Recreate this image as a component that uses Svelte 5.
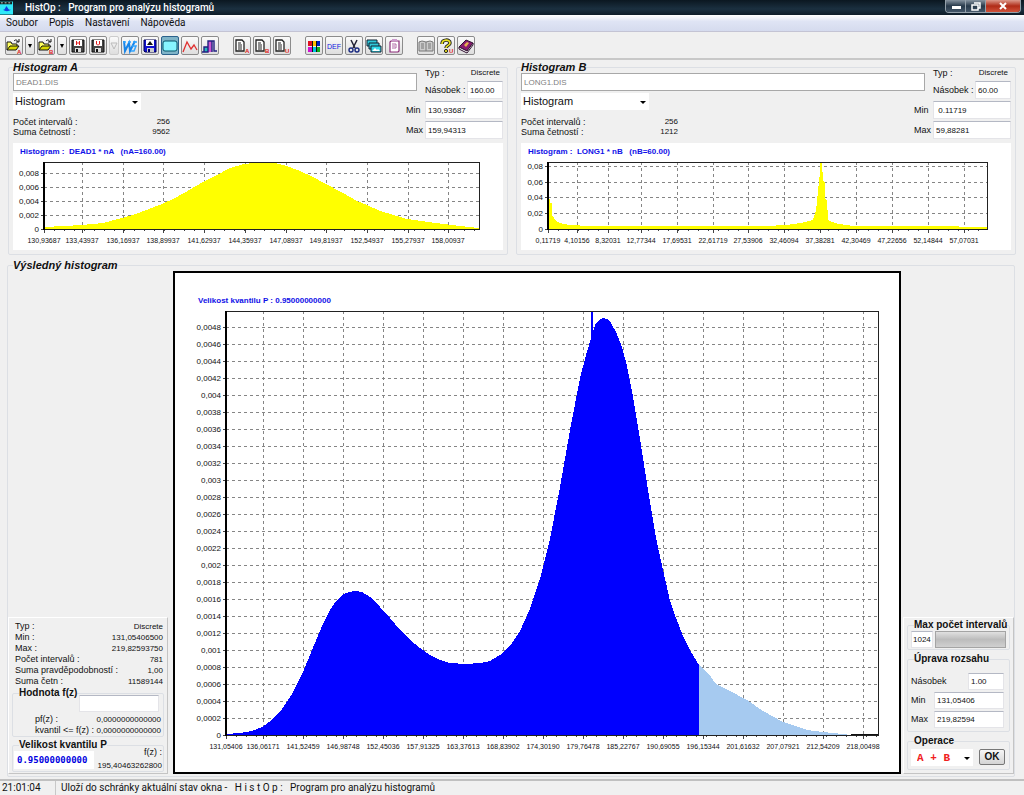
<script lang="ts">
	type Tick = [number, string];
	type Area = { fill: string; points: string };
	type Chart = {
		id: string;
		width: number;
		height: number;
		title: string;
		titleX: number;
		titleY: number;
		left: number;
		right: number;
		top: number;
		bottom: number;
		labelY: number;
		xs: Tick[];
		ys: Tick[];
		areas: Area[];
	};

	const menu = ['Soubor', 'Popis', 'Nastavení', 'Nápověda'];

	const toolbar = [
		['openA', 'drop', 'openB', 'drop', 'saveH', 'saveU', 'dropOff', 'word', 'disk', 'rect', 'curve', 'bars'],
		['docA', 'docB', 'docU'],
		['colors', 'def', 'cut', 'windows', 'paste'],
		['book', 'help', 'manual']
	];

	const labelsA = '133,43937 136,16937 138,89937 141,62937 144,35937 147,08937 149,81937 152,54937 155,27937 158,00937'.split(' ');
	const labelsB = '8,32031 12,77344 17,69531 22,61719 27,53906 32,46094 37,38281 42,30469 47,22656 52,14844 57,07031'.split(' ');
	const gridB = [87, 120, 156, 192, 227, 263, 299, 335, 371, 407, 443];
	const labelsR = '136,06171 141,52459 146,98748 152,45036 157,91325 163,37613 168,83902 174,30190 179,76478 185,22767 190,69055 196,15344 201,61632 207,07921 212,54209 218,00498'.split(' ');

	const chartA: Chart = {
		id: 'a',
		width: 490,
		height: 107,
		title: 'Histogram :  DEAD1 * nA   (nA=160.00)',
		titleX: 7,
		titleY: 11,
		left: 31,
		right: 466,
		top: 19,
		bottom: 86,
		labelY: 100,
		xs: [[31, '130,93687'], ...labelsA.map((l, i): Tick => [Math.round(69 + i * 40.7), l])],
		ys: [[30, '0,008'], [44, '0,006'], [58, '0,004'], [72, '0,002'], [86, '0']],
		areas: [
			{
				fill: '#ffff00',
				points: '31,84 50,83 69,82 90,80 109,75 123,71 136,66 149,61 160,56 171,50 190,39 204,32 217,25 231,21 240,20 262,20 274,23 287,28 300,34 313,41 330,50 344,58 354,62 367,68 374,70 394,76 415,79 447,83 466,85'
			}
		]
	};

	const chartB: Chart = {
		id: 'b',
		width: 490,
		height: 107,
		title: 'Histogram :  LONG1 * nB   (nB=60.00)',
		titleX: 7,
		titleY: 11,
		left: 27,
		right: 466,
		top: 19,
		bottom: 86,
		labelY: 100,
		xs: [[27, '0,11719'], [56, '4,10156'], ...labelsB.map((l, i): Tick => [gridB[i], l])],
		ys: [[23, '0,08'], [39, '0,06'], [54, '0,04'], [70, '0,02'], [86, '0']],
		areas: [
			{
				fill: '#ffff00',
				points: '27,56 29,56 29,60 31,60 31,72 33,75 35,78 39,80 48,82 70,83 245,83 265,82 280,80 292,77 293,73 295,68 297,48 299,30 299,20 301,20 302,38 304,40 304,56 306,57 307,77 311,79 318,81 333,83 410,83 466,84'
			}
		]
	};

	// counted in steps of 0.0002
	function resultLabel(step: number) {
		if (step === 0) return '0';
		return '0,' + (step * 2).toString().padStart(4, '0').replace(/0+$/, '');
	}

	const result: Chart = {
		id: 'r',
		width: 724,
		height: 499,
		title: 'Velikost kvantilu P : 0.95000000000',
		titleX: 23,
		titleY: 30,
		left: 51,
		right: 703,
		top: 38,
		bottom: 462,
		labelY: 476,
		xs: [[51, '131,05406'], ...labelsR.map((l, i): Tick => [88 + i * 40, l])],
		ys: Array.from({ length: 25 }, (_, i): Tick => [462 - i * 17, resultLabel(i)]),
		areas: [
			{
				fill: '#0000ff',
				points: '51,461 65,460 77,458 87,454 97,447 107,436 117,421 128,399 137,377 147,353 155,337 161,328 167,322 174,319 180,318 187,319 195,324 205,334 215,345 225,357 235,367 245,375 255,382 265,387 275,390 290,391 305,390 315,388 325,382 335,373 345,358 355,336 365,306 375,266 385,214 395,157 405,105 411,82 417,62 421,50 425,46 428,45 432,46 436,50 441,59 447,74 452,93 457,118 465,166 473,217 481,265 486,288 495,328 501,345 508,363 515,377 524,392'
			},
			{
				fill: '#a6caf0',
				points: '524,392 530,397 536,404 541,411 555,418 572,427 588,438 608,449 632,457 648,459 668,461 675,462'
			}
		]
	};

	const inputs = [
		{ id: 'a', name: 'Histogram A', file: 'DEAD1.DIS', sum: '9562', factor: '160.00', min: '130,93687', max: '159,94313', chart: chartA },
		{ id: 'b', name: 'Histogram B', file: 'LONG1.DIS', sum: '1212', factor: '60.00', min: ' 0.11719', max: '59,88281', chart: chartB }
	];

	const stats = [
		['Typ :', 'Discrete'],
		['Min :', '131,05406500'],
		['Max :', '219,82593750'],
		['Počet intervalů :', '781'],
		['Suma pravděpodobností :', '1,00'],
		['Suma četn :', '11589144']
	];

	function closed(area: Area, bottom: number) {
		const pts = area.points.split(' ');
		const first = pts[0].split(',')[0];
		const last = pts[pts.length - 1].split(',')[0];
		return `${first},${bottom} ${area.points} ${last},${bottom}`;
	}

	function minor(c: Chart) {
		const out: number[] = [];
		for (let x = c.left + 10; x < c.right; x += 10) out.push(x);
		return out;
	}
</script>

{#snippet plot(c: Chart)}
	<svg class="plot" viewBox="0 0 {c.width} {c.height}" role="img" aria-label={c.title}>
		<text class="plot-title" x={c.titleX} y={c.titleY}>{c.title}</text>
		{#each c.ys as [y, label] (y)}
			<line class="grid" x1={c.left} x2={c.right} y1={y + 0.5} y2={y + 0.5} />
			<line class="tick" x1={c.left - 3} x2={c.left} y1={y + 0.5} y2={y + 0.5} />
			<text class="axis" text-anchor="end" x={c.left - 5} y={y + 3}>{label}</text>
		{/each}
		{#each c.xs as [x, label], i (x)}
			{#if i > 0}
				<line class="grid" x1={x + 0.5} x2={x + 0.5} y1={c.top} y2={c.bottom} />
			{/if}
			<line class="tick" x1={x + 0.5} x2={x + 0.5} y1={c.bottom} y2={c.bottom + 4} />
			<text class="axis x-label" text-anchor="middle" {x} y={c.labelY}>{label}</text>
		{/each}
		{#each minor(c) as x (x)}
			<line class="tick" x1={x + 0.5} x2={x + 0.5} y1={c.bottom} y2={c.bottom + 2} />
		{/each}
		{#each c.areas as area (area.fill)}
			<polygon points={closed(area, c.bottom)} fill={area.fill} shape-rendering="crispEdges" />
		{/each}
		{#if c.id === 'r'}
			<rect x="416" y={c.top} width="2" height="35" fill="#0000ff" />
			<rect x="676" y="461" width="27" height="2" fill="#111" />
		{/if}
		<rect class="frame" x={c.left + 0.5} y={c.top + 0.5} width={c.right - c.left} height={c.bottom - c.top} />
		<line class="y-axis" x1={c.left} x2={c.left} y1={c.top} y2={c.bottom + 1} />
	</svg>
{/snippet}

{#snippet icon(name: string)}
	<svg class="icon" viewBox="0 0 16 16" aria-hidden="true">
		{#if name === 'openA' || name === 'openB'}
			<path d="M1 12V4h4l1 2h5v2" fill="#ffff60" stroke="#111" />
			<path d="M1 12l3-4h9l-3 4z" fill="#d8d800" stroke="#111" />
			<path d="M8 3c2-2 3-1 4 1M13 1v3h-3" fill="none" stroke="#111" />
			<text class="mark" x="11" y="16">{name === 'openA' ? 'A' : 'B'}</text>
		{:else if name === 'saveH' || name === 'saveU'}
			<path d="M2 2h12v12H2z" fill="#444" stroke="#111" />
			<path d="M4 2h8v6H4z" fill="#fff" />
			<path d="M5 10h6v4H5z" fill="#ddd" />
			<path d="M6 11h2v3H6z" fill="#111" />
			<path d={name === 'saveH' ? 'M6.500 3v4M9.500 3v4M6 5h4' : 'M6.500 3v3l1 1h1l1-1V3'} fill="none" stroke="#e02020" />
		{:else if name === 'word'}
			<path d="M2 3l1 10 4-8 1 8 5-10" fill="none" stroke="#1684e8" stroke-width="2" />
			<path d="M1 4h3M6 4h3M11 4h4M10 8h4l-2 5H9" fill="none" stroke="#32a5ff" stroke-width="1.5" />
		{:else if name === 'disk'}
			<path d="M2 2h12v12H3l-1-1z" fill="#1010d0" stroke="#000050" />
			<path d="M4 2h8v6H4z" fill="#fff" />
			<path d="M5 7l3-4 3 4z" fill="#111" />
			<path d="M5 10h7v4H5z" fill="#ccc" />
			<path d="M6 11h2v3H6z" fill="#000070" />
		{:else if name === 'rect'}
			<rect x="1" y="3" width="14" height="10" rx="2" fill="#88f5ff" stroke="#075468" />
		{:else if name === 'curve'}
			<path d="M1 14l4-10 4 7 3-4 3 5" fill="none" stroke="#e03030" stroke-width="1.3" />
		{:else if name === 'bars'}
			<path d="M2 14V9h4v5z" fill="#25b7bd" />
			<path d="M6 14V3h4v11z" fill="#d055d0" />
			<path d="M0 14h6V3h6v10h3M2 14V9h4M10 3v11" fill="none" stroke="#202080" stroke-width="1.4" />
		{:else if name.startsWith('doc')}
			<path d="M2 2h6l2 2v9H2z" fill="#fff" stroke="#222" stroke-width="1.3" />
			<path d="M4 5h3M4 7h4M4 9h4M4 11h4" stroke="#222" />
			<text class="mark" x="11" y="15">{name.slice(3)}</text>
		{:else if name === 'colors'}
			<path d="M2 3h4v5H2z" fill="#e01020" />
			<path d="M7 3h3v5H7z" fill="#ffc000" />
			<path d="M11 3h3v5h-3z" fill="#0020c0" />
			<path d="M2 9h4v5H2z" fill="#d010d0" />
			<path d="M7 9h3v5H7z" fill="#00c8e0" />
			<path d="M11 9h3v5h-3z" fill="#10b020" />
			<path d="M6.500 3v11M10.500 3v11" stroke="#111" />
		{:else if name === 'def'}
			<text class="def" x="8" y="11" text-anchor="middle">DEF</text>
		{:else if name === 'cut'}
			<path d="M5 2l4 8M11 2L7 10" stroke="#223" stroke-width="1.5" />
			<circle cx="5" cy="12" r="2" fill="none" stroke="#1a2a80" stroke-width="1.4" />
			<circle cx="11" cy="12" r="2" fill="none" stroke="#1a2a80" stroke-width="1.4" />
		{:else if name === 'windows'}
			<path d="M1 2h10v6H1z" fill="#30c8d8" stroke="#123" />
			<path d="M3 5h10v6H3z" fill="#30c8d8" stroke="#123" />
			<path d="M5 8h10v6H5z" fill="#30d8e8" stroke="#123" />
			<path d="M6 13l3-3 2 2 1-1 2 2z" fill="#fff" />
		{:else if name === 'paste'}
			<path d="M5 3h8v10l-1 1H4V4z" fill="#fff" stroke="#8a2c78" stroke-width="1.2" />
			<path d="M6 1h5v2H6z" fill="#c9c" />
			<path d="M6 6h4v4H6M6 8h3" fill="none" stroke="#b06aa6" />
		{:else if name === 'book'}
			<path d="M1 4l3-1 4 1 4-1 3 1v9H1z" fill="#ccc" stroke="#777" />
			<path d="M8 4v9M3 6h3M3 8h3M3 10h3M10 6h3M10 8h3M10 10h3" stroke="#777" />
		{:else if name === 'help'}
			<path d="M4 6c0-5 8-5 8-1 0 3-4 2-4 5" fill="none" stroke="#222" stroke-width="3.5" />
			<path d="M4 6c0-5 8-5 8-1 0 3-4 2-4 5" fill="none" stroke="#e8e020" stroke-width="1.6" />
			<circle cx="8" cy="13" r="1.6" fill="#e8e020" stroke="#222" />
			<text class="mark" x="11" y="15">U</text>
		{:else if name === 'manual'}
			<path d="M1 9l7-7 7 3-6 8z" fill="#8a1a70" stroke="#301030" />
			<path d="M1 9v2l8 4 6-8V5l-6 8z" fill="#fff" stroke="#301030" />
			<path d="M6 7l3-3 2 1-3 4z" fill="#e8b050" />
		{/if}
	</svg>
{/snippet}

<div class="window">
	<header class="titlebar">
		<svg class="logo" viewBox="0 0 14 14" aria-hidden="true">
			<path d="M0 0h14v14H0z" fill="#30e8f8" />
			<path d="M0 0h13v3H0z" fill="#122" />
			<path d="M1 1h2v1H1zM5 1h2v1H5zM9 1h2v1H9z" fill="#fff" />
			<path d="M3 9c3 0 3-4 4-4s1 4 5 4c-3 2-6 2-9 0z" fill="#1040e0" />
		</svg>
		<h1>HistOp :&nbsp;&nbsp; Program pro analýzu histogramů</h1>
		<div class="window-buttons">
			<button aria-label="Minimalizovat"><svg viewBox="0 0 20 11"><path d="M6 5h9v3H6z" fill="#fff" /></svg></button>
			<button aria-label="Obnovit"><svg viewBox="0 0 20 11"><path d="M8 2h6v5h-2M6 4h6v5H6z" fill="none" stroke="#fff" stroke-width="1.5" /></svg></button>
			<button class="close" aria-label="Zavřít"><svg viewBox="0 0 20 11"><path d="M7 2l6 6M13 2L7 8" stroke="#fff" stroke-width="2" /></svg></button>
		</div>
	</header>

	<nav class="menu">
		{#each menu as item (item)}
			<button>{item}</button>
		{/each}
	</nav>

	<div class="toolbar">
		{#each toolbar as group, g (g)}
			<div class="tool-group">
				{#each group as tool, i (i)}
					{#if tool.startsWith('drop')}
						<button class="tool drop" class:off={tool === 'dropOff'} aria-label={tool}>
							<svg viewBox="0 0 8 8">
								{#if tool === 'drop'}<path d="M2 2h4L4 6z" />{:else}<path d="M1 1h6L4 7z" fill="none" stroke="#bbb" />{/if}
							</svg>
						</button>
					{:else}
						<button class="tool" class:pressed={tool === 'rect'} aria-label={tool}>{@render icon(tool)}</button>
					{/if}
				{/each}
			</div>
		{/each}
	</div>

	<main>
		<div class="inputs">
			{#each inputs as h (h.id)}
				<fieldset class="group">
					<legend class="heading">{h.name}</legend>
					<div class="top">
						<div class="source">
							<input class="file" value={h.file} aria-label="Soubor" />
							<div class="select kind">
								<select aria-label="Zobrazení"><option>Histogram</option></select>
							</div>
							<dl class="counts">
								<div><dt>Počet intervalů :</dt><dd>256</dd></div>
								<div><dt>Suma četností :</dt><dd>{h.sum}</dd></div>
							</dl>
						</div>
						<div class="range">
							<div class="type"><span>Typ :</span><span class="value">Discrete</span></div>
							<label class="factor">Násobek : <input value={h.factor} /></label>
							<label>Min <input value={h.min} /></label>
							<label>Max <input value={h.max} /></label>
						</div>
					</div>
					<div class="paper">{@render plot(h.chart)}</div>
				</fieldset>
			{/each}
		</div>

		<fieldset class="result">
			<legend class="heading">Výsledný histogram</legend>
			<div class="result-row">
				<aside class="side">
					<dl class="stats">
						{#each stats as [name, value] (name)}
							<div><dt>{name}</dt><dd>{value}</dd></div>
						{/each}
					</dl>
					<fieldset class="box">
						<legend><label for="fz">Hodnota f(z)</label></legend>
						<input id="fz" class="fz" value="" />
						<dl class="fz-values">
							<div><dt>pf(z) :</dt><dd>0,0000000000000</dd></div>
							<div><dt>kvantil &lt;= f(z) :</dt><dd>0,0000000000000</dd></div>
						</dl>
					</fieldset>
					<fieldset class="box">
						<legend><label for="quantile">Velikost kvantilu P</label></legend>
						<div class="quantile">
							<input id="quantile" value="0.95000000000" />
							<div class="quantile-value"><span>f(z) :</span><span class="value">195,40463262800</span></div>
						</div>
					</fieldset>
				</aside>

				<div class="paper framed">{@render plot(result)}</div>

				<aside class="side right">
					<fieldset class="box">
						<legend><label for="limit">Max počet intervalů</label></legend>
						<div class="limit">
							<input id="limit" value="1024" />
							<button class="bar" aria-label="Změnit počet intervalů"></button>
						</div>
					</fieldset>
					<fieldset class="box">
						<legend>Úprava rozsahu</legend>
						<div class="adjust">
							<label>Násobek <input class="short" value="1.00" /></label>
							<label>Min <input value="131,05406" /></label>
							<label>Max <input value="219,82594" /></label>
						</div>
					</fieldset>
					<fieldset class="box">
						<legend>Operace</legend>
						<div class="operation">
							<div class="select op">
								<select aria-label="Operace"><option>A + B</option></select>
							</div>
							<button class="ok">OK</button>
						</div>
					</fieldset>
				</aside>
			</div>
		</fieldset>
	</main>

	<footer class="status">
		<span class="clock">21:01:04</span>
		<span>Uloží do schránky aktuální stav okna -&nbsp;&nbsp; H i s t O p :&nbsp;&nbsp; Program pro analýzu histogramů</span>
	</footer>
</div>

<style>
	:global(body) {
		margin: 0;
		background: #f0f0f0;
	}

	.window {
		font: 9px/11px 'Liberation Sans', Arial, sans-serif;
		color: #111;
		background: #f0f0f0;
		white-space: nowrap;
	}

	.window * {
		box-sizing: border-box;
	}

	button,
	input,
	select {
		margin: 0;
		padding: 0;
		border: 0;
		border-radius: 0;
		font: inherit;
		color: inherit;
	}

	input {
		min-width: 0;
		padding: 0 2px;
		background: #fff;
		border: 1px solid #e4e4e8;
		border-top-color: #b4b8c4;
		font-size: 8px;
	}

	fieldset {
		min-width: 0;
		margin: 0;
		padding: 0;
		border: 1px solid #dcdfe4;
		border-radius: 2px;
	}

	dl,
	dd,
	h1 {
		margin: 0;
	}

	dl div {
		display: flex;
		justify-content: space-between;
	}

	dd,
	.value {
		font-size: 8px;
	}

	.titlebar {
		display: flex;
		align-items: center;
		height: 15px;
		background: linear-gradient(#0b1721, #1b3040 60%, #0e1c28);
		color: #fff;
	}

	.logo {
		width: 13px;
		height: 14px;
		margin-right: 12px;
	}

	h1 {
		flex: 1;
		font: 500 10px/14px Roboto, 'Open Sans', sans-serif;
	}

	.window-buttons {
		display: flex;
		align-self: flex-start;
		margin-right: 3px;
		border: 1px solid #93a0aa;
		border-top: 0;
		border-radius: 0 0 4px 4px;
		overflow: hidden;
	}

	.window-buttons button {
		width: 20px;
		height: 12px;
		background: linear-gradient(#8794a0, #27394a 50%, #45586a);
		border-right: 1px solid #93a0aa;
	}

	.window-buttons .close {
		width: 34px;
		background: linear-gradient(#dc9a8c, #b02c18 50%, #d0523a);
		border: 0;
	}

	.window-buttons svg {
		display: block;
		height: 11px;
		margin: 0 auto;
	}

	.menu {
		display: flex;
		gap: 11px;
		height: 17px;
		padding: 0 6px;
		background: linear-gradient(#fff, #dfe4f4 40%, #d5dbee);
		border-bottom: 1px solid #c4c4d4;
	}

	.menu button {
		background: none;
		font: 10px/16px Roboto, 'Open Sans', sans-serif;
	}

	.toolbar {
		display: flex;
		gap: 14px;
		height: 28px;
		padding: 4px 5px;
		border-bottom: 2px solid #c8c8c8;
	}

	.tool-group {
		display: flex;
		gap: 2px;
	}

	.tool {
		display: grid;
		place-items: center;
		width: 18px;
		height: 19px;
		background: linear-gradient(#fafafa, #dedede);
		border: 1px solid #8c8c8c;
		border-radius: 2px;
	}

	.drop {
		width: 10px;
	}

	.drop svg {
		width: 8px;
		height: 8px;
	}

	.off {
		border-color: #ccc;
	}

	.pressed {
		background: #7fb4c8;
		border-color: #2c628b;
	}

	.icon {
		width: 16px;
		height: 16px;
	}

	.mark {
		font: bold 6px 'Liberation Sans', sans-serif;
		fill: #e02020;
	}

	.def {
		font: 7px 'Liberation Sans', sans-serif;
		fill: #1020e0;
	}

	main {
		padding-top: 1px;
	}

	.inputs {
		display: grid;
		grid-template-columns: 1fr 1fr;
		gap: 8px;
		padding: 0 8px;
	}

	.group {
		padding: 0 4px 4px;
	}

	.heading {
		font: italic bold 11px/12px 'Liberation Sans', Arial, sans-serif;
		color: #111;
	}

	legend {
		padding: 0;
	}

	.top {
		display: grid;
		grid-template-columns: 1fr 97px;
		margin-bottom: 4px;
	}

	.file {
		display: block;
		width: calc(100% + 11px);
		height: 18px;
		border-color: #a8a8a8;
		color: #808080;
	}

	.select {
		position: relative;
		background: #fff;
	}

	.select select {
		width: 100%;
		height: 100%;
		appearance: none;
		background: none;
		padding: 0 2px;
	}

	.select::after {
		content: '';
		position: absolute;
		right: 3px;
		top: 8px;
		border: 3px solid transparent;
		border-top-color: #000;
		border-bottom: 0;
		pointer-events: none;
	}

	.kind {
		width: 128px;
		height: 17px;
		margin-top: 2px;
		font-size: 11px;
	}

	.counts {
		width: 157px;
		padding-top: 7px;
		line-height: 10px;
	}

	.range {
		display: grid;
		gap: 2px;
		margin-top: -6px;
	}

	.range label {
		display: flex;
		justify-content: space-between;
		align-items: center;
		height: 18px;
	}

	.range input {
		width: 78px;
		height: 18px;
	}

	.type {
		display: flex;
		justify-content: space-between;
		padding: 0 3px 0 19px;
		line-height: 12px;
	}

	.range .factor {
		padding-left: 19px;
	}

	.range .factor input {
		width: 36px;
	}

	.paper {
		background: #fff;
	}

	.framed {
		border: 2px solid #000;
		margin: 0 2px 0 5px;
	}

	.plot {
		display: block;
		width: 100%;
	}

	.plot-title {
		font: bold 8px 'Liberation Sans', Arial, sans-serif;
		fill: #1010e8;
		white-space: pre;
	}

	.axis {
		font: 8px 'Liberation Sans', Arial, sans-serif;
		fill: #111;
	}

	.x-label {
		font-size: 7px;
	}

	.grid {
		stroke: #858585;
		stroke-dasharray: 3 3;
	}

	.tick {
		stroke: #444;
	}

	.frame {
		fill: none;
		stroke: #222;
	}

	.y-axis {
		stroke: #000;
		stroke-width: 2;
	}

	.result {
		margin: 4px 9px 0 7px;
		padding-bottom: 2px;
	}

	.result > .heading {
		margin-left: 5px;
	}

	.result-row {
		display: grid;
		grid-template-columns: 160px 1fr 111px;
		align-items: end;
	}

	.side {
		height: 157px;
		padding: 3px 3px 0;
		border: 1px solid #fff;
		border-right-color: #c4c4c4;
		border-bottom-color: #c4c4c4;
	}

	.stats {
		padding: 0 1px 0 3px;
	}

	.box legend {
		margin-left: 6px;
		font: bold 10px/12px 'Liberation Sans', Arial, sans-serif;
		color: #111;
	}

	.fz {
		display: block;
		width: 80px;
		height: 17px;
		margin: -4px 4px 2px auto;
	}

	.fz-values {
		padding: 0 2px 0 22px;
	}

	.box + .box {
		margin-top: 2px;
	}

	.quantile {
		display: flex;
		justify-content: space-between;
		height: 20px;
		padding: 0 1px;
	}

	.quantile input {
		flex-shrink: 0;
		width: 80px;
		height: 18px;
		border-color: #fff;
		font: bold 9px/12px 'DejaVu Sans Mono', monospace;
		color: #0000e0;
	}

	.quantile-value {
		display: flex;
		flex-direction: column;
		justify-content: space-between;
		align-items: flex-end;
		margin-top: -4px;
	}

	.right {
		padding-top: 1px;
	}

	.right .box + .box {
		margin-top: 3px;
	}

	.limit,
	.operation {
		display: flex;
		gap: 2px;
		padding: 0 3px 1px;
	}

	.limit input {
		width: 22px;
		height: 17px;
		padding: 0 1px;
	}

	.bar {
		flex: 1;
		height: 17px;
		background: linear-gradient(#e0e0e0, #bcbcbc 50%, #d0d0d0);
		border: 1px solid #a4a4a4;
	}

	.adjust {
		display: grid;
		gap: 2px;
		padding: 8px 5px 3px 3px;
	}

	.adjust label {
		display: flex;
		justify-content: space-between;
		align-items: center;
	}

	.adjust input {
		width: 70px;
		height: 17px;
	}

	.adjust .short {
		width: 36px;
	}

	.operation {
		justify-content: space-between;
		padding: 2px 4px 3px 3px;
	}

	.op {
		width: 62px;
		height: 17px;
	}

	.op select {
		padding-left: 6px;
		font: bold 11px/14px 'Liberation Mono', monospace;
		color: #f02020;
	}

	.ok {
		width: 26px;
		height: 16px;
		background: linear-gradient(#f6f6f6, #d4d4d4);
		border: 1px solid #777;
		border-radius: 2px;
		font: bold 10px/12px 'Liberation Sans', sans-serif;
	}

	.status {
		display: flex;
		height: 16px;
		margin-top: 2px;
		border-top: 2px solid #c0c0c0;
		font: 10px/14px Roboto, 'Open Sans', sans-serif;
	}

	.clock {
		width: 56px;
		margin-right: 5px;
		padding-left: 2px;
		border-right: 1px solid #c8c8c8;
	}
</style>
